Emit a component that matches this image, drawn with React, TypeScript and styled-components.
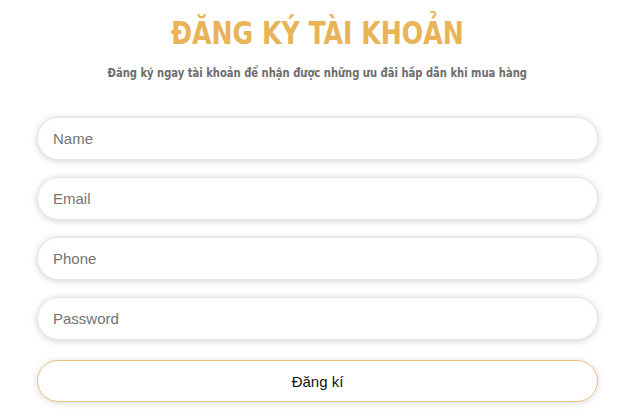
import React from "react";
import styled, { createGlobalStyle } from "styled-components";

const Global = createGlobalStyle`
  html, body { margin: 0; padding: 0; background: #fff; }
  * { box-sizing: border-box; }
`;

const Page = styled.div`
  width: 624px;
  height: 420px;
  padding: 12px 26px 0 37px;
  overflow: hidden;
  display: flex;
  flex-direction: column;
`;

const Header = styled.header`
  display: flex;
  flex-direction: column;
  align-items: center;
`;

const Title = styled.h1`
  margin: 0;
  font-family: "DejaVu Sans Condensed", "DejaVu Sans", sans-serif;
  font-weight: 700;
  font-size: 32px;
  line-height: 42px;
  color: #e8b457;
  white-space: nowrap;
  transform: scaleX(0.875);
`;

const Subtitle = styled.p`
  margin: 10px 0 0;
  font-family: "DejaVu Sans Condensed", "DejaVu Sans", sans-serif;
  font-weight: 700;
  font-size: 13px;
  line-height: 18px;
  color: #6d6d6d;
  white-space: nowrap;
  transform: scaleX(0.855);
`;

const Form = styled.form`
  margin-top: 35px;
  display: flex;
  flex-direction: column;
  gap: 17px;
`;

const Field = styled.input`
  width: 100%;
  height: 43px;
  border: 1px solid #e6e6e6;
  border-radius: 22px;
  padding: 0 15px;
  background: #fff;
  box-shadow: 0 1px 7px rgba(0, 0, 0, 0.18);
  font-family: "Liberation Sans", Arial, sans-serif;
  font-size: 15px;
  color: #333;
  outline: none;
  &::placeholder { color: #737373; }
`;

const Submit = styled.button`
  margin-top: 3px;
  width: 100%;
  height: 42px;
  border: 1px solid #eac27a;
  border-radius: 22px;
  background: #fff;
  box-shadow: 0 1px 7px rgba(0, 0, 0, 0.14);
  font-family: "Liberation Sans", Arial, sans-serif;
  font-size: 15px;
  color: #111;
  cursor: pointer;
`;

export default function App() {
  return (
    <>
      <Global />
      <Page>
        <Header>
          <Title>ĐĂNG KÝ TÀI KHOẢN</Title>
          <Subtitle>Đăng ký ngay tài khoản để nhận được những ưu đãi hấp dẫn khi mua hàng</Subtitle>
        </Header>
        <Form onSubmit={(e) => e.preventDefault()}>
          <Field placeholder="Name" />
          <Field placeholder="Email" />
          <Field placeholder="Phone" />
          <Field placeholder="Password" type="password" />
          <Submit type="submit">Đăng kí</Submit>
        </Form>
      </Page>
    </>
  );
}
